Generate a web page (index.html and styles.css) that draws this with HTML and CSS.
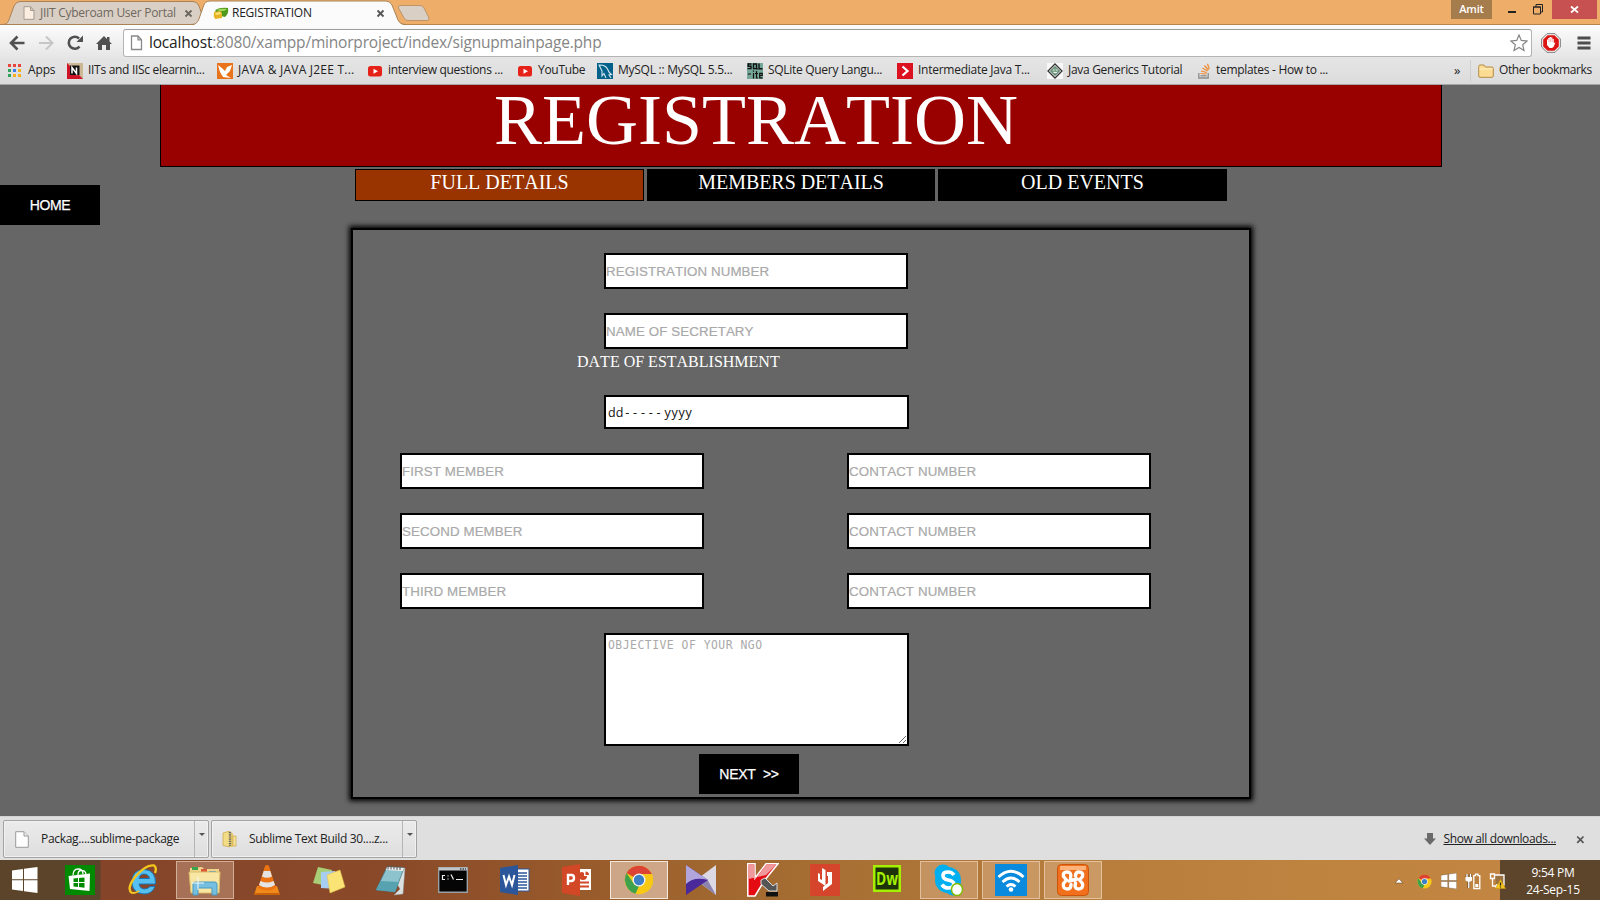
FILE: index.html
```html
<!DOCTYPE html>
<html lang="en">
<head>
<meta charset="utf-8">
<title>REGISTRATION</title>
<link rel="stylesheet" href="styles.css">
</head>
<body>
<div class="screen">
  <header class="tabstrip">
    <svg class="tab-shapes" width="440" height="26" viewBox="0 0 440 26">
      <path d="M2 24.5C8 24.500 8 22 10 17L14 6Q16 1.500 20 1.500H192Q197 1.500 199 6L204 20V24.500Z" fill="#dacfc4" stroke="#a98255"/>
      <path d="M190 25.500C197 25 198 22 200 16L203.500 6Q205 1 210 1H386Q390 1 392 5L398 20Q400 24.500 406 25.500Z" fill="#fbfbfb"/>
      <path d="M190 24.500C197 24.500 198 22 200 16L203.500 6Q205 1 210 1H386Q390 1 392 5L398 20Q400 24.500 406 24.500" fill="none" stroke="#a98255"/>
      <path d="M400 5.500H420Q423 5.500 424 8L429 18Q429.500 20.500 427 20.500H408Q405 20.500 404 18L398.500 8Q398 5.500 400 5.500Z" fill="#dacfc4" stroke="#bd9468"/>
    </svg>
    <div class="tab tab-one">
      <svg width="12" height="14" viewBox="0 0 12 14"><path d="M1 .7H7.500L11 4.500V13.300H1ZM7.500 .7V4.500H11" fill="#fbeee0" stroke="#a49a90"/></svg>
      <span class="tab-title">JIIT Cyberoam User Portal</span>
      <svg class="x" width="9" height="9" viewBox="0 0 9 9"><path d="M1.500 1.500L7.500 7.500M7.500 1.500L1.500 7.500" stroke="#6b6560" stroke-width="1.800"/></svg>
    </div>
    <div class="tab tab-two">
      <svg width="16" height="14" viewBox="0 0 16 14"><path d="M2 5Q5 1 15 2Q16 8 12 11Q5 10 2 5Z" fill="#4f9a1c"/><path d="M4 4Q8 2 14 3Q11 6 6 5Z" fill="#a4d65a"/><path d="M1 6L7 5L9 7V12L2 13Q0 10 1 6Z" fill="#e8b323"/><path d="M2 7L7 6L8 8L3 9Z" fill="#fbe27a"/></svg>
      <span class="tab-title">REGISTRATION</span>
      <svg class="x" width="9" height="9" viewBox="0 0 9 9"><path d="M1.500 1.500L7.500 7.500M7.500 1.500L1.500 7.500" stroke="#555" stroke-width="1.800"/></svg>
    </div>
    <div class="window-controls">
      <span class="user">Amit</span>
      <svg class="min" width="8" height="19" viewBox="0 0 8 19"><path d="M0 12H8" stroke="#222" stroke-width="2"/></svg>
      <svg class="max" width="11" height="19" viewBox="0 0 11 19"><path d="M3 6.500V4.500H9.500V12H8M.5 7H7.500V14H.5ZM0 7H8" fill="none" stroke="#222"/></svg>
      <span class="close"><svg width="9" height="9" viewBox="0 0 9 9"><path d="M1 1.500L8 7.500M8 1.500L1 7.500" stroke="#fff" stroke-width="1.700"/></svg></span>
    </div>
  </header>

  <nav class="toolbar">
    <svg class="nav-icons" width="106" height="18" viewBox="0 0 106 18">
      <g fill="none" stroke="#505050" stroke-width="2.600">
        <path d="M15.500 9H2M8.500 2.500L2 9L8.500 15.500"/>
        <path d="M30 9H43.500M37 2.500L43.500 9L37 15.500" stroke="#c6c6c6" stroke-width="2"/>
        <path d="M70.500 12.500A6 6 0 1 1 70 4.500"/>
      </g>
      <path d="M74 1.500V8H67.500Z" fill="#505050"/>
      <path d="M87 10L95 2L98 5V3H100.500V7.500L103 10H101V16H97V11H93V16H89V10Z" fill="#505050"/>
    </svg>
    <div class="omnibox">
      <svg width="13" height="16" viewBox="0 0 13 16"><path d="M1.500 1H8L11.500 4.800V14.500H1.500ZM8 1V4.800H11.500" fill="#fff" stroke="#8a8a8a" stroke-width="1.300"/></svg>
      <span class="url"><b>localhost</b>:8080/xampp/minorproject/index/signupmainpage.php</span>
      <svg width="18" height="18" viewBox="0 0 18 18"><path d="M9 1L11.300 6.400L17 7L12.700 10.800L14 16.500L9 13.500L4 16.500L5.300 10.800L1 7L6.700 6.400Z" fill="#fff" stroke="#858585" stroke-width="1.200"/></svg>
    </div>
    <svg class="adblock" width="20" height="20" viewBox="0 0 20 20"><path d="M6 .6H14L19.400 6V14L14 19.400H6L.6 14V6Z" fill="#eee" stroke="#777" stroke-width=".9"/><path d="M6.600 2.200H13.400L17.800 6.600V13.400L13.400 17.800H6.600L2.200 13.400V6.600Z" fill="#dc1414"/><path d="M6 9V6.500H7.200V5H8.600V4H10V4.600H11.400V6H12.800V10L14.500 9.500L12.500 14L11 15H8.500L6 12Z" fill="#fff"/><path d="M8 6V9M9.700 5V9M11.300 6V9" stroke="#e66" stroke-width=".5"/></svg>
    <svg class="menu" width="14" height="14" viewBox="0 0 14 14"><path d="M.5 2H13.500M.5 7H13.500M.5 12H13.500" stroke="#4d4d4d" stroke-width="2.800"/></svg>
  </nav>

  <nav class="bookmarks">
    <div class="bm bm-apps">
      <svg width="13" height="13" viewBox="0 0 13 13"><path d="M0 0h3v3H0ZM5 0h3v3H5ZM10 0h3v3h-3Z" fill="#e8453c"/><path d="M0 5h3v3H0ZM0 10h3v3H0Z" fill="#2fa45a"/><path d="M5 5h3v3H5Z" fill="#3b7ded"/><path d="M10 5h3v3h-3ZM5 10h3v3H5ZM10 10h3v3h-3Z" fill="#f5b01a"/></svg>
      <span>Apps</span>
    </div>
    <div class="bm"><svg width="16" height="16" viewBox="0 0 16 16"><path d="M0 0H16V16H0Z" fill="#cdb896"/><path d="M0 0L16 16H0Z" fill="#d01428"/><path d="M3 2.500H12.500V12H3Z" fill="#111"/><path d="M5 10.500V4.500L9.500 10.500V4.500" fill="none" stroke="#fff" stroke-width="1.500"/></svg><span class="t1">IITs and IISc elearnin...</span></div>
    <div class="bm"><svg width="16" height="16" viewBox="0 0 16 16"><path d="M0 0H16V16H0Z" fill="#e9731b"/><path d="M1 2L6 6L8 8L10 4L15 2L13 8L9 12L14 15L6 14L3 9Z" fill="#fff"/></svg><span class="t2">JAVA &amp; JAVA J2EE T...</span></div>
    <div class="bm"><svg width="16" height="16" viewBox="0 0 16 16"><rect x="1" y="3" width="14" height="10.500" rx="2.500" fill="#e62117"/><path d="M6.500 5.800L11 8.200L6.500 10.700Z" fill="#fff"/></svg><span class="t3">interview questions ...</span></div>
    <div class="bm bm-short"><svg width="16" height="16" viewBox="0 0 16 16"><rect x="1" y="3" width="14" height="10.500" rx="2.500" fill="#e62117"/><path d="M6.500 5.800L11 8.200L6.500 10.700Z" fill="#fff"/></svg><span class="t4">YouTube</span></div>
    <div class="bm"><svg width="16" height="16" viewBox="0 0 16 16"><path d="M0 0H16V16H0Z" fill="#00618a"/><path d="M1.500 2Q9 1.500 11 7Q12 10 14.500 11.500L12 12L14 15M2 2L5 8V13L7 10.500L9 15" fill="none" stroke="#d5e8f0" stroke-width="1.100"/></svg><span class="t5">MySQL :: MySQL 5.5...</span></div>
    <div class="bm"><svg width="16" height="16" viewBox="0 0 16 16"><path d="M0 0H16V16H0Z" fill="#74a596"/><path d="M4.500 1H1.200V3.200H4V5.600H.5M6.500 1H9.500V5.600H6.500ZM9 4.500L10.500 6.500M12 .5V5.700H15.500" fill="none" stroke="#111" stroke-width="1.400"/><path d="M1 11H4M6.500 10V15.500M6.500 7.500V8.700M9.500 8V15H11M8 10.500H11M12.500 12.500H15.200V10.300H12.700V14.800H15.500" fill="none" stroke="#111" stroke-width="1.200"/></svg><span class="t6">SQLite Query Langu...</span></div>
    <div class="bm"><svg width="16" height="16" viewBox="0 0 16 16"><path d="M0 0H16V16H0Z" fill="#dc1220"/><path d="M5.500 3.500L10.500 8L5.500 12.500" fill="none" stroke="#fff" stroke-width="2.300"/></svg><span class="t7">Intermediate Java T...</span></div>
    <div class="bm"><svg width="16" height="16" viewBox="0 0 16 16"><path d="M0 0H16V16H0Z" fill="#f8f8f8"/><path d="M8 1L15 8L8 15L1 8Z" fill="none" stroke="#333" stroke-width="1.300"/><path d="M8 3.500L12.500 8L8 12.500L3.500 8Z" fill="#7fa68c" stroke="#3d6b50"/><path d="M6 7H7.500M9 7H10.500M6.500 9.500H10" stroke="#eee"/></svg><span class="t8">Java Generics Tutorial</span></div>
    <div class="bm bm-last"><svg width="16" height="16" viewBox="0 0 16 16"><path d="M1.800 10V15H11.200V10" fill="none" stroke="#8c8c8c" stroke-width="1.300"/><path d="M3.500 12.800H9.500" stroke="#8c8c8c" stroke-width="1.300"/><path d="M3.500 10.500L9.600 11M4 8L9.900 9.500M5.500 5L10.600 8M7.500 2.500L11.500 7M10.500 .8L12.300 6" stroke="#ee8a32" stroke-width="1.200"/></svg><span class="t9">templates - How to ...</span></div>
    <span class="more">»</span>
    <div class="other"><svg width="16" height="14" viewBox="0 0 16 14"><path d="M.7 2.500Q.7 1 2 1H6L7.500 3H14Q15.300 3 15.300 4.500V12Q15.300 13.300 14 13.300H2Q.7 13.300 .7 12Z" fill="#fbdc92" stroke="#b58a4b"/><path d="M1.500 5H14.500" stroke="#fff0c4"/></svg><span>Other bookmarks</span></div>
  </nav>

  <main class="page">
    <h1 class="banner">REGISTRATION</h1>
    <a class="home">HOME</a>
    <ul class="steps">
      <li class="active">FULL DETAILS</li>
      <li class="members">MEMBERS DETAILS</li>
      <li>OLD EVENTS</li>
    </ul>
    <form class="panel">
      <input class="field mid" placeholder="REGISTRATION NUMBER">
      <input class="field mid" placeholder="NAME OF SECRETARY">
      <label class="date-label">DATE OF ESTABLISHMENT</label>
      <div class="date mid"><span class="dd">dd</span><span class="dash">-----</span><span class="yy">yyyy</span></div>
      <div class="pair"><input class="field" placeholder="FIRST MEMBER"><input class="field" placeholder="CONTACT NUMBER"></div>
      <div class="pair"><input class="field" placeholder="SECOND MEMBER"><input class="field" placeholder="CONTACT NUMBER"></div>
      <div class="pair"><input class="field" placeholder="THIRD MEMBER"><input class="field" placeholder="CONTACT NUMBER"></div>
      <textarea class="objective mid" placeholder="OBJECTIVE OF YOUR NGO"></textarea>
      <button class="next" type="button">NEXT&nbsp; &gt;&gt;</button>
    </form>
  </main>

  <section class="downloads">
    <div class="dl"><svg width="14" height="17" viewBox="0 0 14 17"><path d="M.7 .7H9L13.300 5V16.300H.7Z" fill="#fdfdfd" stroke="#9a9a9a"/><path d="M9 .7V5H13.300" fill="#eee" stroke="#9a9a9a"/></svg><span class="dl-name d1">Packag....sublime-package</span><span class="dl-arrow"></span></div>
    <div class="dl dl-two"><svg width="15" height="17" viewBox="0 0 15 17"><path d="M1 2L8 0V16L1 14.500Z" fill="#f3dc86" stroke="#c9a545" stroke-width=".7"/><path d="M8 2H11V16H8Z" fill="#e9cb6a"/><path d="M11 5H14V15H11Z" fill="#f7e49c" stroke="#c9a545" stroke-width=".7"/><path d="M8 1V15" stroke="#666" stroke-width="2.400" stroke-dasharray="1.200 1"/></svg><span class="dl-name d2">Sublime Text Build 30....z...</span><span class="dl-arrow"></span></div>
    <div class="show-all"><svg width="12" height="12" viewBox="0 0 12 12"><path d="M3 0H9V5.500H12L6 12L0 5.500H3Z" fill="#6a6a6a"/></svg><a>Show all downloads...</a><svg class="x" width="9" height="9" viewBox="0 0 9 9"><path d="M1.200 1.500L7.500 7.800M7.500 1.500L1.200 7.800" stroke="#555" stroke-width="1.700"/></svg></div>
  </section>

  <footer class="taskbar">
    <div class="task start"><svg width="26" height="26" viewBox="0 0 26 26"><path d="M0 3.500L11 2V12.300H0ZM12 1.800L25.500 0V12.300H12ZM0 13.300H11V24L0 22.500ZM12 13.300H25.500V26L12 24.200Z" fill="#fff"/></svg></div>
    <div class="task store"><svg width="30" height="30" viewBox="0 0 30 30"><path d="M0 0H30V30H0Z" fill="#008a00"/><path d="M3.500 11L25 8.500L24.500 26L5 24Z" fill="#fff"/><path d="M8 10.500Q8 4 13 4Q18 4 18 9M13 10Q13 5.500 16 5.500Q20 5 21 9" fill="none" stroke="#fff" stroke-width="1.300"/><path d="M8.500 13.500L13 13V17H8.500ZM14 13L19.500 12.500V17H14ZM8.500 18H13V22L8.500 21.500ZM14 18H19.500V22.700L14 22Z" fill="#008a00"/></svg></div>
    <div class="task"><svg width="32" height="32" viewBox="0 0 32 32"><path d="M28.500 20H12Q13 25 17.500 25Q21 25 23 22.500H28Q25 30 17 30Q5 29 5 18Q5 6 17 5.500Q29 6 28.500 20ZM12 14.500H22.500Q21.500 10 17 10Q13 10 12 14.500Z" fill="#56c1f0" stroke="#1c76b5"/><path d="M5 29Q-1 25 8 13Q19 0 27 1.500Q30 3 28 9" fill="none" stroke="#f4c51d" stroke-width="2.400"/><path d="M4.500 28.500Q7 30 12 27" fill="none" stroke="#f4c51d" stroke-width="2"/></svg></div>
    <div class="task open"><svg width="34" height="32" viewBox="0 0 34 32"><path d="M2 4L14 3L16 5H31V27H2Z" fill="#eed58a"/><path d="M4 3H10V6H4Z" fill="#38a54c"/><path d="M13 5H19V8H13Z" fill="#d9583b"/><path d="M21 7H28V9H21Z" fill="#3a9adf"/><path d="M1 8H32L31 29H3Z" fill="#f8e6a4" stroke="#dcbc66"/><path d="M5 31V20Q5 18 8 18H26Q29 18 29 20V31H24V24H10V31Z" fill="#77bfe0" stroke="#4b97c0"/><path d="M10 13V26M4 19H16" stroke="#f4fbff" stroke-width="1"/></svg></div>
    <div class="task"><svg width="28" height="32" viewBox="0 0 28 32"><path d="M4 22H24L27 31H1Z" fill="#f08a1a"/><path d="M1 29H27V31H1Z" fill="#c96208"/><path d="M12 2Q14 0 16 2L23 24Q14 29 5 24Z" fill="#ec7312"/><path d="M10.700 7H17.300L19 12.500Q14 15 9 12.500ZM7.500 17Q14 20 20.500 17L22 21Q14 26 6 21Z" fill="#e4e4e4"/></svg></div>
    <div class="task"><svg width="34" height="28" viewBox="0 0 34 28"><path d="M6 1L20 4L16 20L1 17Z" fill="#a8cf77"/><path d="M9 6L23 5L24 23L9 22Z" fill="#a7cdf2"/><path d="M15 9L28 4L33 21L18 27Z" fill="#fae476" stroke="#e4c349" stroke-width=".5"/></svg></div>
    <div class="task"><svg width="32" height="32" viewBox="0 0 32 32"><path d="M12 3L30 4L28 30L19 31L25 25Z" fill="#dce0e0" stroke="#8a9699" stroke-width=".5"/><path d="M12 3L29 4L20 28L1 26Z" fill="#8dc3cd" stroke="#3a7380" stroke-width=".7"/><path d="M12 3L29 4L28 7L11 6Z" fill="#eee"/><path d="M13 1.500V5.500M16 1.500V5.500M19 1.500V5.500M22 2V6M25 2V6" stroke="#555"/><path d="M6 17L24 18L20 28L1 26Z" fill="#57a2b0"/></svg></div>
    <div class="task"><svg width="30" height="26" viewBox="0 0 30 26"><path d="M.7 .7H29.300V25.300H.7Z" fill="#050505" stroke="#9aa0a4" stroke-width="1.400"/><path d="M1 2H29" stroke="#bfc5c9" stroke-width="3"/><path d="M22 2H28" stroke="#445" stroke-width="1.500" stroke-dasharray="1.500 1"/><path d="M7 8.500H4.500V12.500H7M10 8.500V9.500M10 11.500V12.500M13 7.500L15.500 12.500M18 12.500H25" fill="none" stroke="#eee" stroke-width="1.200"/></svg></div>
    <div class="task"><svg width="30" height="30" viewBox="0 0 30 30"><path d="M16 4H29V26H16Z" fill="#fff" stroke="#2b579a"/><path d="M18 8H27M18 11H27M18 14H27M18 17H27M18 20H27M18 23H27" stroke="#2b579a" stroke-width="1.500"/><path d="M0 3L18 0V30L0 27Z" fill="#2b579a"/><path d="M3.500 10L6 20L9 11.500L12 20L14.500 10" fill="none" stroke="#fff" stroke-width="2"/></svg></div>
    <div class="task"><svg width="30" height="32" viewBox="0 0 30 32"><path d="M17 5H29V26H17Z" fill="#fff"/><path d="M18 18.500H27M18 22.500H27" stroke="#d24726" stroke-width="1.800"/><path d="M18 8.500Q20.500 7.500 22 9V12H25Q25 16 21 16Q19 16 18 15ZM23.500 7.500Q27 7.500 27 11H23.500Z" fill="#d24726"/><path d="M0 3L18 0V32L0 29Z" fill="#d24726"/><path d="M6 21V11H9.500Q12 11 12 14Q12 17 9 17H6" fill="none" stroke="#fff" stroke-width="2.400"/></svg></div>
    <div class="task open current"><svg width="30" height="30" viewBox="0 0 30 30"><circle cx="15" cy="15" r="14.200" fill="#f7c914"/><path d="M15 15L2.500 8Q7 .8 15 .8Q23.500 1 28 9H15Z" fill="#dc4334"/><path d="M2.500 8L10 19L15 21L11.500 28.700Q2 26 .8 15Q.8 11 2.500 8Z" fill="#3fa14c"/><circle cx="15" cy="15" r="6.500" fill="#f5f5f5"/><circle cx="15" cy="15" r="5.200" fill="#3b7fc4"/></svg></div>
    <div class="task"><svg width="32" height="30" viewBox="0 0 32 30"><path d="M31 0V30L11 15Z" fill="#dcd9e4"/><path d="M31 30L11 15L22 14Z" fill="#8b83ae"/><path d="M1 0L23 15L1 30Z" fill="#4a2a9a"/><path d="M1 0L23 15Q9 11 1 19Z" fill="#b0a6dc"/></svg></div>
    <div class="task"><svg width="32" height="34" viewBox="0 0 32 34"><path d="M.8 .8H8V15L19 .8H31L17 18L8 33H.8Z" fill="#e40b12" stroke="#fff" stroke-width="1.500"/><path d="M1.500 1.500H7.500V17L19.500 1.500H29.500L19 12L1.500 16Z" fill="#f0999c"/><path d="M14 17L18 15L26 23L30 20V28L22 28L14 21Z" fill="#555" stroke="#ddd"/><path d="M19 29H31V33.500H19Z" fill="#111"/></svg></div>
    <div class="task"><svg width="30" height="32" viewBox="0 0 30 32"><path d="M0 0H30V32H0Z" fill="#d5452b"/><path d="M12 4L15.500 6V22L8 17V9L10 10V15L12 16ZM17 8H22V20L13 27V23L18 19V12H17Z" fill="#fff"/></svg></div>
    <div class="task dreamweaver"><svg width="28" height="27" viewBox="0 0 28 27"><path d="M1.250 1.250H26.750V25.750H1.250Z" fill="#1f330b" stroke="#a3f000" stroke-width="2.500"/><text x="3" y="19.500" class="dw" textLength="22" lengthAdjust="spacingAndGlyphs">Dw</text></svg></div>
    <div class="task open"><svg width="30" height="32" viewBox="0 0 30 32"><circle cx="9" cy="9" r="8.500" fill="#00aff0"/><circle cx="19" cy="23" r="8.500" fill="#00aff0"/><circle cx="14" cy="16" r="13" fill="#00aff0"/><path d="M20 11Q18 8 14 8Q9 8 9 11.500Q9 15 14 16Q20 17 20 20.500Q19 24 14.500 24Q10 24 8 20.500" fill="none" stroke="#fff" stroke-width="3.600"/><ellipse cx="23" cy="25.500" rx="5.500" ry="6" fill="#fff" stroke="#7fba00" stroke-width="1.500"/></svg></div>
    <div class="task open"><svg width="32" height="32" viewBox="0 0 32 32"><path d="M0 0H32V32H0Z" fill="#0a8add"/><path d="M3.500 13Q16 1.500 28.500 13M7.500 18Q16 10 24.500 18M11.500 22.500Q16 18.500 20.500 22.500" fill="none" stroke="#fff" stroke-width="2.900"/><circle cx="16" cy="25.500" r="2.300" fill="#fff"/></svg></div>
    <div class="task open"><svg width="32" height="32" viewBox="0 0 32 32"><rect x=".5" y=".5" width="31" height="31" rx="4" fill="#f26f1c" stroke="#c9540c"/><path d="M3 2H29V6H3Z" fill="#ffb27a"/><path d="M13.500 14Q15 8 10 8Q5.500 8 6.500 12.500L9.500 16L6.500 19.500Q5.500 25 10.500 25Q14 25 14 20.500M18.500 12Q18.500 8 22 8Q26.500 8 25.500 12.500L22.500 16L25.500 19.500Q26.500 25 21.500 25Q17 25 18.500 19M12 17L20 15" fill="none" stroke="#fff" stroke-width="3.400" stroke-linecap="round" stroke-linejoin="round"/></svg></div>
    <div class="tray">
      <svg width="10" height="6" viewBox="0 0 10 6"><path d="M1 5L5 .8L9 5Z" fill="#fff" stroke="#6b5030" stroke-width=".6"/></svg>
      <svg class="tray-chrome" width="15" height="15" viewBox="0 0 30 30"><circle cx="15" cy="15" r="14.200" fill="#f7c914"/><path d="M15 15L2.500 8Q7 .8 15 .8Q23.500 1 28 9H15Z" fill="#dc4334"/><path d="M2.500 8L10 19L15 21L11.500 28.700Q2 26 .8 15Q.8 11 2.500 8Z" fill="#3fa14c"/><circle cx="15" cy="15" r="6.500" fill="#f5f5f5"/><circle cx="15" cy="15" r="5.200" fill="#3b7fc4"/></svg>
      <svg width="16" height="16" viewBox="0 0 26 26"><path d="M0 3.500L11 2V12.300H0ZM12.500 1.800L25.500 0V12.300H12.500ZM0 13.800H11V24L0 22.500ZM12.500 13.800H25.500V26L12.500 24.200Z" fill="#fff" stroke="#5b4226" stroke-width=".6"/></svg>
      <svg width="16" height="17" viewBox="0 0 16 17"><g fill="none" stroke="#5b4226" stroke-width="2.600"><path d="M2 1V5M5.500 1V5M3.800 8V15"/></g><path d="M2 1V4M5.500 1V4M3.800 8V15" stroke="#fff" stroke-width="1.400"/><path d="M.5 4H7V7.500Q4 10 .5 7.500Z" fill="#fff"/><path d="M8.800 2.700H10.500V1.200H13V2.700H14.800V15.500H8.800Z" fill="#b9803e" stroke="#fff" stroke-width="1.300"/><path d="M10.300 11H13.300V14H10.300Z" fill="#fff"/></svg>
      <svg width="17" height="17" viewBox="0 0 17 17"><path d="M6 2H15V12H7" fill="#9a7040" stroke="#fff" stroke-width="1.300"/><path d="M1.500 1H5.500V5.500H1.500ZM3.500 6V13H7V15" fill="none" stroke="#fff" stroke-width="1.300"/><path d="M11.500 6.500L16.500 15.500H6.500Z" fill="#f7c51e" stroke="#c99508" stroke-width=".5"/><path d="M11.500 9.500V12.500M11.500 13.500V14.600" stroke="#222" stroke-width="1.300"/></svg>
    </div>
    <div class="clock"><span>9:54 PM</span><span>24-Sep-15</span></div>
  </footer>
</div>
</body>
</html>
```
FILE: styles.css
```css
* { box-sizing: border-box; }
body { margin: 0; font-family: "Open Sans", "Noto Sans", sans-serif; font-size: 12px; color: #222; }
svg { display: block; flex: none; }
.screen { width: 1600px; height: 900px; display: flex; flex-direction: column; overflow: hidden; background: #666; }

/* Browser tab strip */
.tabstrip { position: relative; height: 25px; flex: none; display: flex; background: #eeae6a; box-shadow: inset 0 -1px #b58450; }
.tab-shapes { position: absolute; left: 0; top: 0; }
.tab { position: relative; display: flex; align-items: center; height: 26px; white-space: nowrap; }
.tab-one { width: 200px; padding-left: 23px; color: #6f6861; }
.tab-two { width: 200px; padding-left: 13px; color: #222; }
.tab-title { flex: 1; padding-bottom: 2px; }
.tab-one .tab-title { padding-left: 5px; letter-spacing: -.28px; }
.tab-two .tab-title { padding-left: 3px; letter-spacing: -.25px; }
.tab-one .x { margin-right: 7px; }
.tab-two .x { margin-right: 15px; }
.window-controls { margin-left: auto; display: flex; height: 19px; margin-right: 3px; }
.user { width: 41px; text-align: center; line-height: 18px; margin-right: 16px; background: #a57c4c; color: #fff; font-weight: 600; font-size: 11px; letter-spacing: -.2px; }
.min { margin-right: 17px; }
.max { margin-right: 8px; }
.close { width: 45px; display: flex; align-items: center; justify-content: center; background: #c75050; }

/* Toolbar */
.toolbar { height: 32px; flex: none; display: flex; align-items: center; padding: 4px 9px 0 9px; background: linear-gradient(#fcfcfc, #e6e6e6); }
.nav-icons { margin-right: 8px; }
.omnibox { width: 1410px; height: 28px; display: flex; align-items: center; padding: 0 3px 0 6px; border: 1px solid #b4b4b4; border-top-color: #9c9c9c; border-radius: 3px; background: #fff; }
.url { flex: 1; padding: 0 0 2px 6px; font-size: 15.500px; line-height: 23px; color: #858585; letter-spacing: -.19px; }
.url b { font-weight: 400; color: #222; }
.adblock { margin-left: 9px; }
.menu { margin-left: 16px; }

/* Bookmarks bar */
.bookmarks { height: 28px; flex: none; display: flex; align-items: center; padding-left: 8px; background: linear-gradient(#e5e5e5, #dcdcdc); border-bottom: 1px solid #a6a6a6; white-space: nowrap; }
.bm { width: 150px; display: flex; align-items: center; gap: 5px; flex: none; }
.bm-apps { width: 59px; gap: 7px; }
.bm-short { width: 80px; }
.bm-last { width: 257px; gap: 3px; }
.bm span, .other span { padding-bottom: 2px; letter-spacing: -.3px; }
.bm-apps span { letter-spacing: -.15px; }
.bm .t2 { letter-spacing: .22px; }
.bm .t5, .bm .t7 { letter-spacing: -.26px; }
.more { width: 16px; font-size: 13px; padding-bottom: 2px; }
.other { display: flex; align-items: center; gap: 5px; height: 22px; padding-left: 7px; border-left: 1px solid #cfcfcf; }
.bookmarks .other span { letter-spacing: -.38px; }

/* Page content */
.page { position: relative; flex: 1; overflow: hidden; font-family: "Liberation Serif", serif; font-kerning: none; color: #fff; }
.banner { margin: -1px 0 0 160px; width: 1282px; height: 83px; padding-left: 333px; border: 1px solid #000; background: #900; font-size: 72px; line-height: 70px; font-weight: 400; }
.home { position: absolute; left: 0; top: 100px; width: 100px; height: 40px; background: #000; text-align: center; font: 14px/40px "Liberation Sans", sans-serif; letter-spacing: -.35px; -webkit-text-stroke: .25px #fff; }
.steps { display: flex; gap: 3px; margin: 2px 0 0 355px; padding: 0; list-style: none; }
.steps li { width: 289px; height: 32px; border: 1px solid #000; background: #000; text-align: center; font-size: 20px; line-height: 24px; }
.steps .active { background: #930; }
.steps .members { width: 288px; letter-spacing: -.04px; }
.panel { display: flex; flex-direction: column; align-items: flex-start; margin: 27px 0 0 351px; width: 900px; height: 571px; border: 2px solid #000; box-shadow: 0 0 5px 2px #000; padding-top: 23px; }
.mid { margin-left: 251px; }
.field { width: 304px; height: 36px; flex: none; border: 2px solid #000; border-radius: 0; padding: 0; margin-bottom: 24px; background: #fff; font: 13.330px "Liberation Sans", sans-serif; font-kerning: none; letter-spacing: .1px; }
.field.mid + .field.mid { margin-bottom: 0; }
.field::placeholder, .objective::placeholder { color: #a9a9a9; opacity: 1; }
.field::placeholder { -webkit-text-stroke: .2px #a9a9a9; }
.date-label { margin: 3px 0 0 224px; height: 43px; font-size: 16px; line-height: 19px; }
.date { width: 305px; height: 34px; flex: none; display: flex; align-items: center; margin-bottom: 24px; padding: 1px 0 0 2px; border: 2px solid #000; background: #fff; color: #111; font: 12.500px "Open Sans", sans-serif; }
.dash { letter-spacing: 3.800px; padding-left: 2px; }
.yy { letter-spacing: .8px; }
.pair { display: flex; gap: 143px; margin-left: 47px; }
.objective { display: block; width: 305px; height: 113px; flex: none; margin-bottom: 8px; padding: 3px 2px; border: 2px solid #000; border-radius: 0; background: #fff; font: 11.400px "DejaVu Sans Mono", monospace; letter-spacing: .5px; }
.next { width: 100px; height: 40px; flex: none; margin-left: 346px; padding: 0; border: 0; background: #000; color: #fff; font: 14px "Liberation Sans", sans-serif; letter-spacing: -.25px; -webkit-text-stroke: .25px #fff; }

/* Download shelf */
.downloads { height: 44px; flex: none; display: flex; padding: 3px 15px 0 3px; gap: 2px; background: #dfdfdf; border-top: 1px solid #d3d3d3; }
.dl { width: 206px; height: 38px; display: flex; align-items: center; padding-left: 11px; border: 1px solid #a3a3a3; border-radius: 2px; background: linear-gradient(#ebebeb, #dedede); box-shadow: inset 0 0 0 1px #f1f1f1; white-space: nowrap; color: #222; }
.dl-two { padding-left: 10px; }
.dl-name { flex: 1; padding: 0 0 1px 12px; letter-spacing: -.31px; }
.d2 { letter-spacing: -.33px; }
.dl-arrow { width: 14px; height: 36px; border-left: 1px solid #b5b5b5; padding: 12px 0 0 4px; }
.dl-arrow::before { content: ""; display: block; width: 0; border: 3px solid transparent; border-top-color: #555; border-bottom: 0; }
.show-all { margin-left: auto; display: flex; align-items: center; height: 38px; gap: 7px; text-decoration: underline; letter-spacing: -.36px; }
.show-all a { padding-bottom: 1px; }
.show-all .x { margin-left: 13px; }

/* Taskbar */
.taskbar { height: 40px; flex: none; display: flex; background: linear-gradient(90deg, #5b442a 0 100px, #84442a 101px, #8a4a29 400px, #96592b 560px, #a0662f 700px, #a87034 850px, #b67c3b 1060px, #bf8340 1300px, #c28642 1500px); }
.task { width: 62px; display: flex; align-items: center; justify-content: center; flex: none; }
.start { width: 50px; }
.store { padding-right: 2px; }
.dreamweaver { padding-bottom: 3px; }
.open { background: rgba(255, 225, 205, .28); background-clip: content-box; position: relative; padding: 1px 2px; }
.open::after { content: ""; position: absolute; inset: 1px 2px; border: 1px solid rgba(255, 235, 215, .5); }
.current { background-color: rgba(255, 235, 225, .5); }
.current::after { border-color: #f4e8dc; }
.dw { font: 700 17px "Open Sans", sans-serif; fill: #a3f000; }
.tray { flex: 1; display: flex; align-items: center; justify-content: flex-end; gap: 8px; padding: 2px 0 0; margin-right: -6px; position: relative; z-index: 1; }
.tray-chrome { margin: 0 1px 0 5px; }
.clock { width: 100px; background: #5c452a; color: #fff; text-align: center; display: flex; flex-direction: column; padding: 4px 0 0 6px; line-height: 17px; letter-spacing: -.25px; }
```
